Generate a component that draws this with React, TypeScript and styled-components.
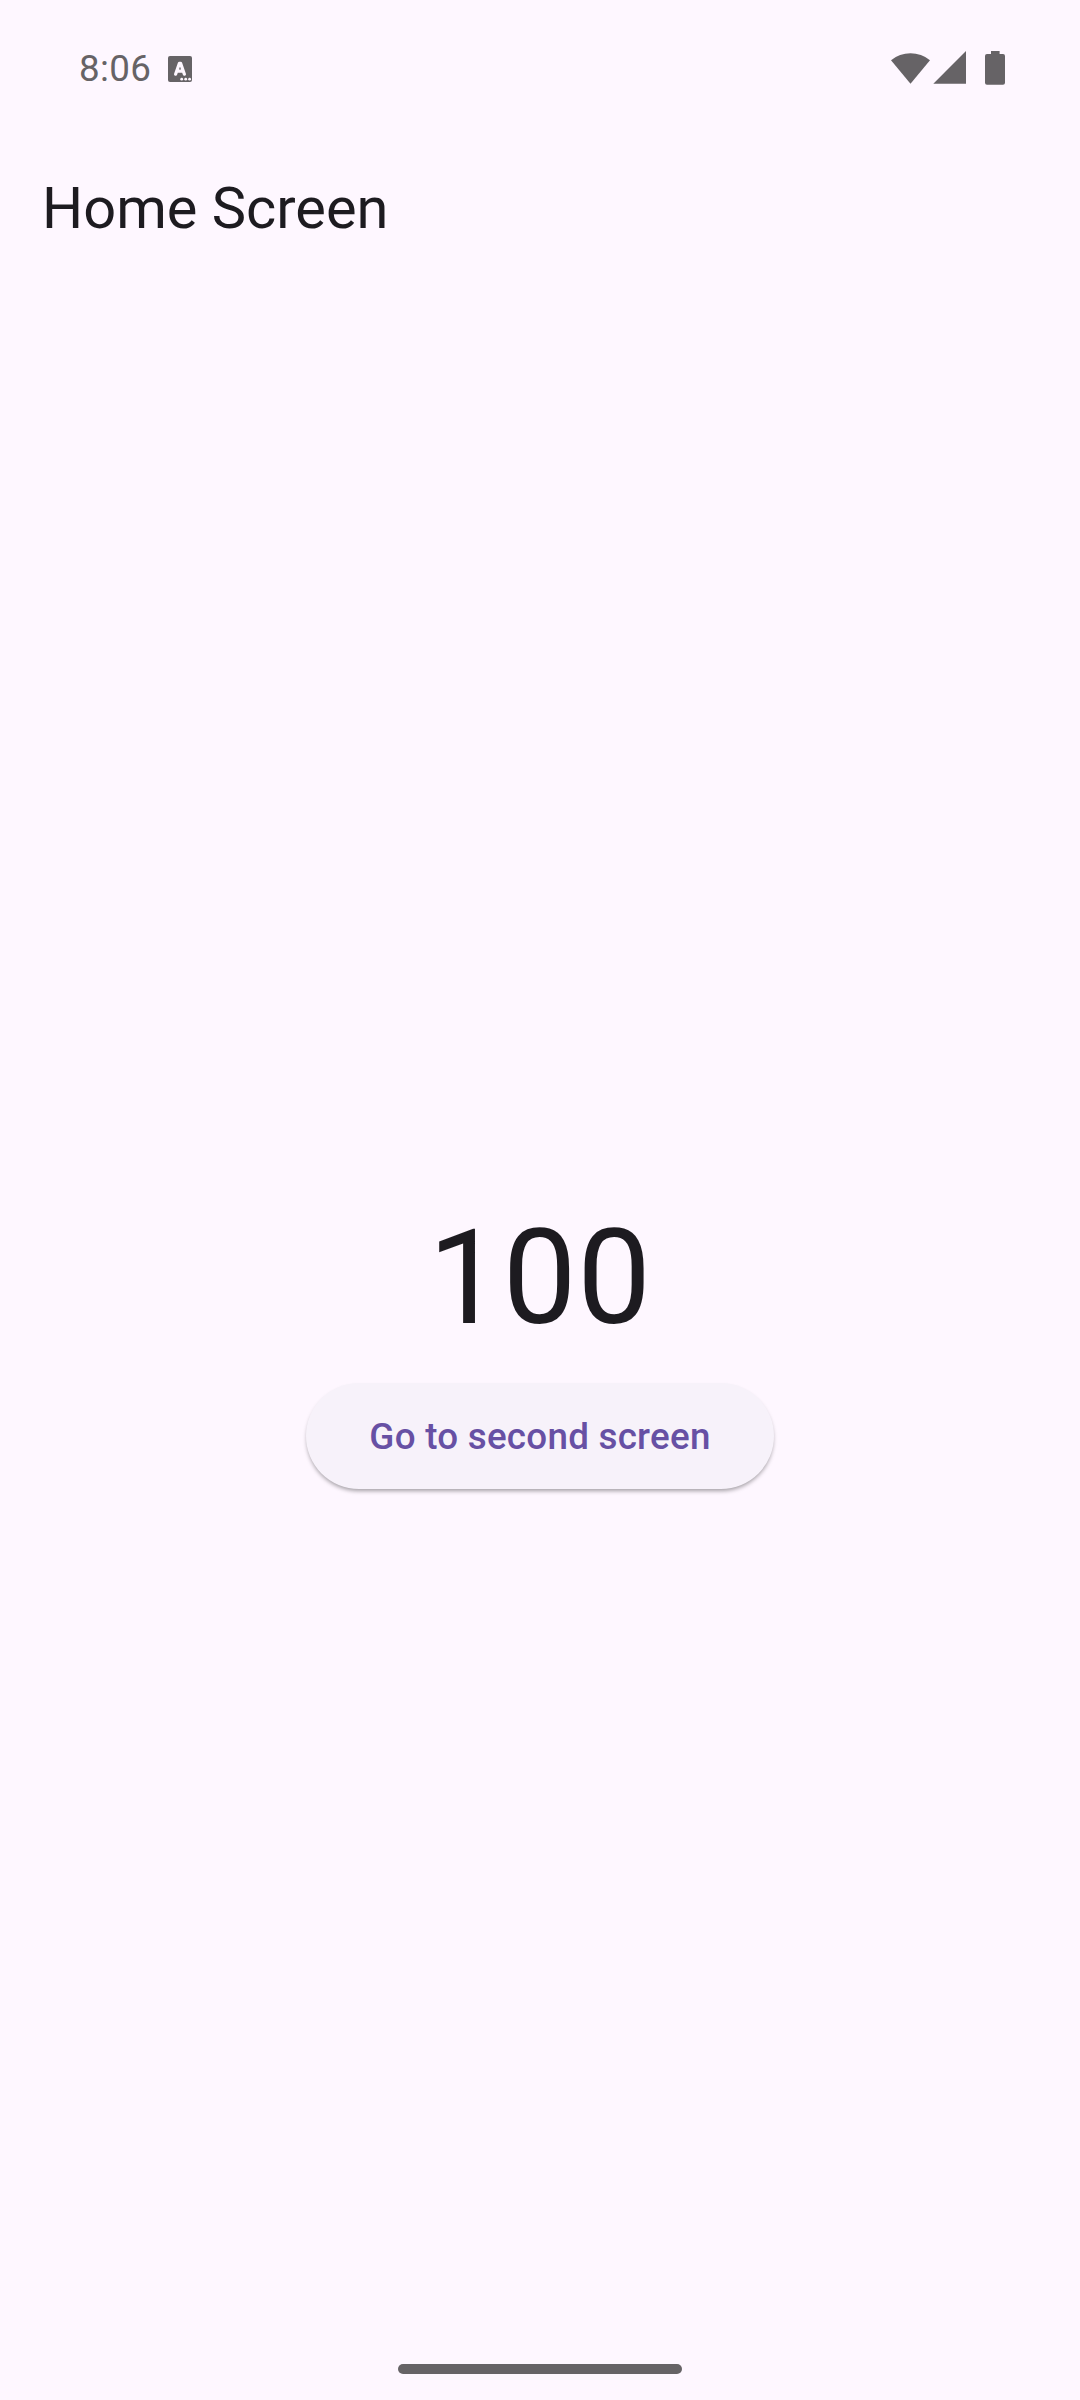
import React from "react";
import styled, { createGlobalStyle } from "styled-components";

const GlobalStyle = createGlobalStyle`
  body { margin: 0; background: #fef7ff; }
  * { box-sizing: border-box; }
`;

const Screen = styled.div`
  display: flex;
  flex-direction: column;
  width: 1080px;
  height: 2400px;
  background: #fef7ff;
  color: #1d1b20;
  font-family: Roboto, sans-serif;
`;

const StatusBar = styled.header`
  display: flex;
  justify-content: space-between;
  height: 136px;
  padding: 46px 70px 0 79px;
  color: #666366;
`;

const StatusGroup = styled.div`
  display: flex;
  height: 44px;
`;

const Clock = styled.span`
  width: 85px;
  font-size: 36.75px;
  font-weight: 400;
  letter-spacing: 0.35px;
  line-height: 46px;
`;

const Icon = styled.svg`
  display: block;
  fill: currentColor;
`;

const AppBar = styled.div`
  display: flex;
  align-items: center;
  height: 143px;
  padding: 0 42px;
`;

const Title = styled.h1`
  margin: 0;
  font-size: 57.75px;
  font-weight: 400;
  line-height: 74px;
`;

const Body = styled.main`
  display: flex;
  flex: 1;
  flex-direction: column;
  align-items: center;
  padding-top: 905px;
`;

const Counter = styled.div`
  height: 199px;
  font-size: 131.25px;
  letter-spacing: 0.66px;
  line-height: 188px;
`;

const PillButton = styled.button`
  width: 468px;
  height: 106px;
  padding: 0;
  border: 0;
  border-radius: 53px;
  background: #f7f2fa;
  box-shadow: 0 3px 4px -1px rgba(0, 0, 0, 0.36);
  color: #6750a4;
  font-family: inherit;
  font-size: 36.75px;
  font-weight: 500;
  letter-spacing: 0.2625px;
`;

const NavigationBar = styled.footer`
  display: flex;
  justify-content: center;
  height: 36px;
`;

const Handle = styled.div`
  width: 284px;
  height: 10px;
  border-radius: 5px;
  background: #666366;
`;

export default function App() {
  return (
    <Screen>
      <GlobalStyle />
      <StatusBar>
        <StatusGroup>
          <Clock>8:06</Clock>
          <Icon width="34" height="44" viewBox="164 46 34 44">
            <path d="M170 56h20a2 2 0 0 1 2 2v22a2 2 0 0 1-2 2h-20a2 2 0 0 1-2-2V58a2 2 0 0 1 2-2z" />
            <path d="M175.6 74.2l3.8-10.8h1.2l3.8 10.800M177.300 71.200h5.400" fill="none" stroke="#fef7ff" strokeWidth="3.2" strokeLinecap="round" strokeLinejoin="round" />
            <g fill="#fef7ff">
              <circle cx="181.700" cy="79.200" r="1.400" />
              <circle cx="185.700" cy="79.200" r="1.400" />
              <circle cx="189.600" cy="79.200" r="1.400" />
            </g>
          </Icon>
        </StatusGroup>
        <StatusGroup>
          <Icon width="124" height="44" viewBox="886 46 124 44">
            <path d="M910.500 83.700L891 60.200a30.500 30.500 0 0 1 39 0z" />
            <path d="M966 51v32.700h-32.700z" />
            <path d="M991 51h8.600v3h3.400a2 2 0 0 1 2 2v26.700a2 2 0 0 1-2 2h-16a2 2 0 0 1-2-2V56a2 2 0 0 1 2-2h4z" />
          </Icon>
        </StatusGroup>
      </StatusBar>
      <AppBar>
        <Title>Home Screen</Title>
      </AppBar>
      <Body>
        <Counter>100</Counter>
        <PillButton type="button">Go to second screen</PillButton>
      </Body>
      <NavigationBar>
        <Handle />
      </NavigationBar>
    </Screen>
  );
}
